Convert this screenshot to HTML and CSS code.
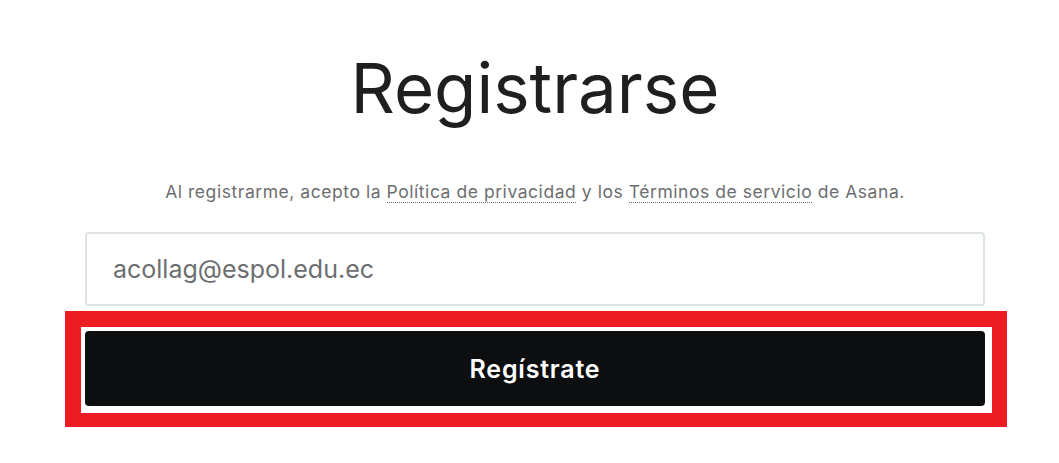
FILE: index.html
```html
<!DOCTYPE html>
<html lang="es">
<head>
<meta charset="utf-8">
<title>Registrarse</title>
<link rel="stylesheet" href="styles.css">
</head>
<body>
<main class="signup">
  <h1 class="signup-title">Registrarse</h1>
  <p class="signup-terms">Al registrarme, acepto la <a href="#" class="terms-link">Política de privacidad</a> y los <a href="#" class="terms-link">Términos de servicio</a> de Asana.</p>
  <form class="signup-form">
    <input class="email-input" type="email" value="acollag@espol.edu.ec">
    <div class="highlight">
      <button class="submit-button" type="button">Regístrate</button>
    </div>
  </form>
</main>
</body>
</html>
```
FILE: styles.css
```css
html, body {
  margin: 0;
  padding: 0;
  background: #ffffff;
}

body {
  font-family: "Inter", "Noto Sans", sans-serif;
}

.signup {
  width: 900px;
  margin-left: 85px;
  padding-top: 38px;
  display: flex;
  flex-direction: column;
  align-items: center;
}

.signup-title {
  margin: 0;
  font-size: 69px;
  line-height: 100px;
  font-weight: 400;
  color: #1e1f21;
  letter-spacing: 0;
}

.signup-terms {
  margin: 42px 0 0;
  font-size: 17.5px;
  line-height: 24px;
  letter-spacing: 0.55px;
  color: #6d6e6f;
}

.terms-link {
  color: #6d6e6f;
  text-decoration: none;
  border-bottom: 1px dotted #6d6e6f;
}

.signup-form {
  margin-top: 28px;
  width: 900px;
  display: flex;
  flex-direction: column;
}

.email-input {
  box-sizing: border-box;
  width: 900px;
  height: 74px;
  margin: 0;
  padding: 0 26px;
  border: 2px solid #dde2e5;
  border-radius: 4px;
  font-family: inherit;
  font-size: 25px;
  color: #6d6e6f;
  outline: none;
}

.highlight {
  margin: 5px -22px 0 -20px;
  padding: 4px 7px 7px 4px;
  border: 16px solid #ed1c24;
  border-bottom-width: 14px;
  border-right-width: 15px;
  border-top-width: 16px;
}

.submit-button {
  display: block;
  width: 900px;
  height: 75px;
  margin: 0;
  border: 0;
  border-radius: 4px;
  background: #0d0e10;
  color: #ffffff;
  font-family: inherit;
  font-size: 25px;
  font-weight: 600;
  letter-spacing: 0.8px;
  cursor: pointer;
}
```
